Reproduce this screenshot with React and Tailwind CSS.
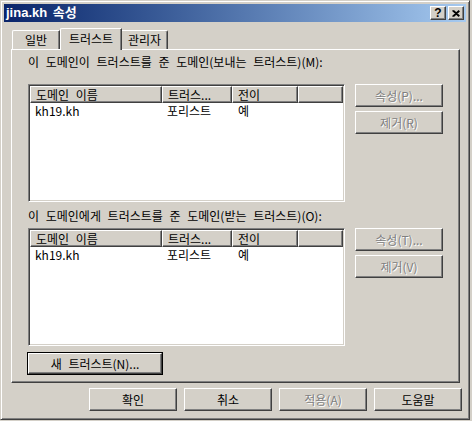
import React from 'react'

const raised =
  'border border-t-white border-l-white border-r-[#404040] border-b-[#404040] shadow-[inset_-1px_-1px_0_#808080]'

const Button = ({ label, disabled, isDefault, className = '' }) => {
  const text = disabled
    ? 'text-[#808080] [text-shadow:1px_1px_0_#ffffff]'
    : 'text-black'
  if (isDefault) {
    return (
      <div className={`border border-black ${className}`}>
        <div className={`h-full w-full flex items-center justify-center bg-[#d4d0c8] ${raised} ${text}`}>
          {label}
        </div>
      </div>
    )
  }
  return (
    <div className={`flex items-center justify-center bg-[#d4d0c8] ${raised} ${text} ${className}`}>
      {label}
    </div>
  )
}

// COLUMNS
const cols = [
  { name: '도메인 이름', w: 'w-[132px]' },
  { name: '트러스...', w: 'w-[70px]' },
  { name: '전이', w: 'w-[66px]' },
]

const ListView = () => (
  <div className="w-[317px] h-[118px] bg-white border border-t-[#808080] border-l-[#808080] border-r-white border-b-white shadow-[inset_1px_1px_0_#404040,inset_-1px_-1px_0_#d4d0c8] p-[1px]">
    <div className="flex h-[17px] bg-[#d4d0c8]">
      {cols.map((c) => (
        <div key={c.name} className={`${c.w} shrink-0 h-full flex items-center pl-[5px] ${raised}`}>
          {c.name}
        </div>
      ))}
      <div className={`flex-1 h-full ${raised}`} />
    </div>
    <div className="flex h-[16px] items-center">
      <div className="w-[132px] pl-[5px]">kh19.kh</div>
      <div className="w-[70px] pl-[5px]">포리스트</div>
      <div className="w-[66px] pl-[6px]">예</div>
    </div>
  </div>
)

export default function App() {
  return (
    <div className="w-[472px] h-[421px] bg-[#d4d0c8] text-[12px] leading-[14px] text-black [word-spacing:4px] font-['Noto_Sans_CJK_KR',sans-serif]">
      <div className="w-[470px] h-[420px] bg-[#d4d0c8] border border-t-[#d4d0c8] border-l-[#d4d0c8] border-r-[#404040] border-b-[#404040] shadow-[inset_1px_1px_0_#ffffff,inset_-1px_-1px_0_#808080] p-[3px] flex flex-col">

        {/* TITLE BAR */}
        <div className="h-[18px] bg-linear-to-r from-[#0a246a] to-[#a6caf0] flex items-center justify-between pl-[2px] pr-[2px]">
          <span className="text-white font-bold text-[13px] [word-spacing:2px] font-['Liberation_Sans','Noto_Sans_CJK_KR',sans-serif]">
            jina.kh 속성
          </span>
          <div className="flex gap-[2px]">
            <div className={`w-[16px] h-[14px] bg-[#d4d0c8] flex items-center justify-center ${raised}`}>
              <span className="font-bold text-[12px] leading-none font-['Liberation_Sans',sans-serif]">?</span>
            </div>
            <div className={`w-[16px] h-[14px] bg-[#d4d0c8] flex items-center justify-center ${raised}`}>
              <svg width="8" height="7" viewBox="0 0 8 7">
                <path d="M0.5 0.5 L7 6.5 M1.5 0.5 L7.5 6 M7 0.5 L0.5 6.5 M7.5 1 L1.5 6.5" stroke="#000" strokeWidth="1.2" fill="none" />
              </svg>
            </div>
          </div>
        </div>

        {/* TABS */}
        <div className="h-[27px] flex items-end pl-[8px]">
          <div className="w-[48px] h-[19px] flex items-center justify-center border-t border-l border-t-white border-l-white border-r border-r-[#404040] shadow-[inset_-1px_0_0_#808080] rounded-tl-[2px]">
            일반
          </div>
          <div className="w-[62px] h-[22px] -mb-px relative z-10 bg-[#d4d0c8] flex items-center justify-center border-t border-l border-t-white border-l-white border-r border-r-[#404040] shadow-[inset_-1px_0_0_#808080] rounded-tl-[2px] pb-[2px]">
            트러스트
          </div>
          <div className="w-[46px] h-[19px] flex items-center justify-center border-t border-t-white border-r border-r-[#404040] shadow-[inset_-1px_0_0_#808080] rounded-tr-[2px]">
            관리자
          </div>
        </div>

        {/* PANEL */}
        <div className="ml-[7px] w-[449px] h-[334px] border border-t-white border-l-white border-r-[#404040] border-b-[#404040] shadow-[inset_-1px_-1px_0_#808080] pl-[16px] pt-[5px] flex flex-col">
          <div className="h-[14px]">이 도메인이 트러스트를 준 도메인(보내는 트러스트)(M):</div>
          <div className="flex gap-[10px] mt-[15px]">
            <ListView />
            <div className="flex flex-col gap-[4px]">
              <Button label="속성(P)..." disabled className="w-[88px] h-[23px]" />
              <Button label="제거(R)" disabled className="w-[88px] h-[23px]" />
            </div>
          </div>

          <div className="h-[14px] mt-[7px]">이 도메인에게 트러스트를 준 도메인(받는 트러스트)(O):</div>
          <div className="flex gap-[10px] mt-[5px]">
            <ListView />
            <div className="flex flex-col gap-[4px]">
              <Button label="속성(T)..." disabled className="w-[88px] h-[23px]" />
              <Button label="제거(V)" disabled className="w-[88px] h-[23px]" />
            </div>
          </div>

          <Button label="새 트러스트(N)..." isDefault className="w-[136px] h-[23px] mt-[6px] -ml-px" />
        </div>

        {/* DIALOG BUTTONS */}
        <div className="flex justify-end gap-[7px] mt-[5px] pr-[4px]">
          <Button label="확인" className="w-[88px] h-[23px]" />
          <Button label="취소" className="w-[88px] h-[23px]" />
          <Button label="적용(A)" disabled className="w-[88px] h-[23px]" />
          <Button label="도움말" className="w-[88px] h-[23px]" />
        </div>
      </div>
    </div>
  )
}
